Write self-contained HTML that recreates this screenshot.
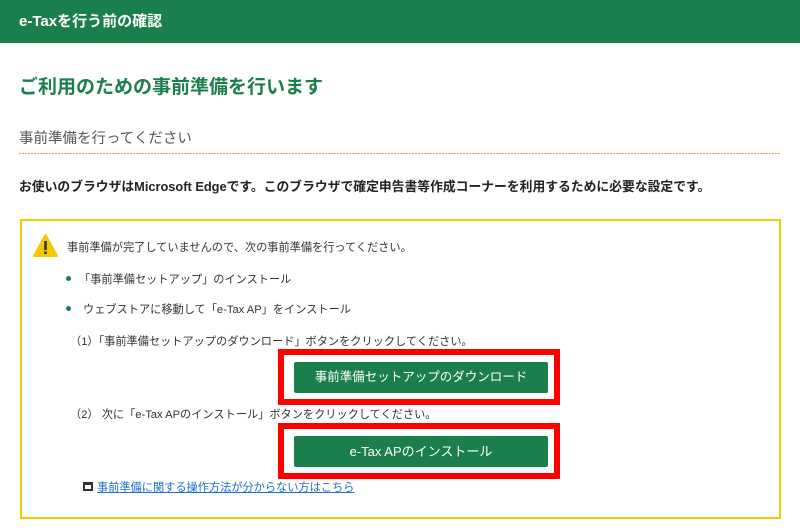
<!DOCTYPE html>
<html><head><meta charset="utf-8"><style>
*{margin:0;padding:0;box-sizing:border-box}
body{width:800px;height:530px;background:#fff;font-family:"Liberation Sans","Noto Sans CJK JP",sans-serif;position:relative;overflow:hidden;color:#333}
.a{position:absolute;white-space:nowrap}
.hdr{left:0;top:0;width:800px;height:43px;background:#1a7f4b;color:#fff;font-weight:bold;font-size:15px;line-height:43px;padding-left:19px}
.t{left:19px;top:72px;font-size:19px;font-weight:bold;color:#1a7f4b}
.s{left:19px;top:127px;font-size:14.5px;color:#555}
.dot{left:19px;top:153px;width:762px;height:1px;background:repeating-linear-gradient(90deg,#f0a030 0 2px,transparent 2px 3px)}
.b{left:19px;top:176px;font-size:12.8px;font-weight:bold;color:#222}
.box{left:20px;top:219px;width:761px;height:300px;border:2px solid #f5c800}
.n{font-size:11.2px;color:#333}
.red{border:6px solid #f00;background:#fff}
.btn{background:#1a7f4b;color:#fff;text-align:center;border-radius:2px}
.bl{width:5px;height:5px;border-radius:50%;background:#1a7f4b}
</style></head><body>
<div class="a hdr">e-Taxを行う前の確認</div>
<div class="a t">ご利用のための事前準備を行います</div>
<div class="a s">事前準備を行ってください</div>
<div class="a dot"></div>
<div class="a b">お使いのブラウザはMicrosoft Edgeです。このブラウザで確定申告書等作成コーナーを利用するために必要な設定です。</div>
<div class="a box"></div>
<svg class="a" style="left:33px;top:234px" width="25" height="23" viewBox="0 0 25 23"><path d="M12.5 1 L24 22 L1 22 Z" fill="#f5c800" stroke="#f5c800" stroke-linejoin="round" stroke-width="2"/><rect x="11.2" y="7" width="2.6" height="9" fill="#333"/><rect x="11.2" y="17.5" width="2.6" height="2.6" fill="#333"/></svg>
<div class="a n" style="left:67px;top:239px">事前準備が完了していませんので、次の事前準備を行ってください。</div>
<div class="a bl" style="left:66px;top:276px"></div>
<div class="a n" style="left:79px;top:271px">「事前準備セットアップ」のインストール</div>
<div class="a bl" style="left:66px;top:306px"></div>
<div class="a n" style="left:83px;top:301px">ウェブストアに移動して「e-Tax AP」をインストール</div>
<div class="a n" style="left:70px;top:333px">（1）「事前準備セットアップのダウンロード」ボタンをクリックしてください。</div>
<div class="a red" style="left:278px;top:349px;width:282px;height:56px"></div>
<div class="a btn" style="left:294px;top:362px;width:254px;height:31px;line-height:31px;font-size:12.5px">事前準備セットアップのダウンロード</div>
<div class="a n" style="left:70px;top:406px">（2） 次に「e-Tax APのインストール」ボタンをクリックしてください。</div>
<div class="a red" style="left:278px;top:423px;width:282px;height:56px"></div>
<div class="a btn" style="left:294px;top:436px;width:254px;height:31px;line-height:31px;font-size:13px">e-Tax APのインストール</div>
<div class="a" style="left:83px;top:482px;width:10px;height:9px;border:2px solid #333;border-top-width:3px"></div>
<div class="a n" style="left:97px;top:479px;color:#1a6fd0;text-decoration:underline">事前準備に関する操作方法が分からない方はこちら</div>
</body></html>
